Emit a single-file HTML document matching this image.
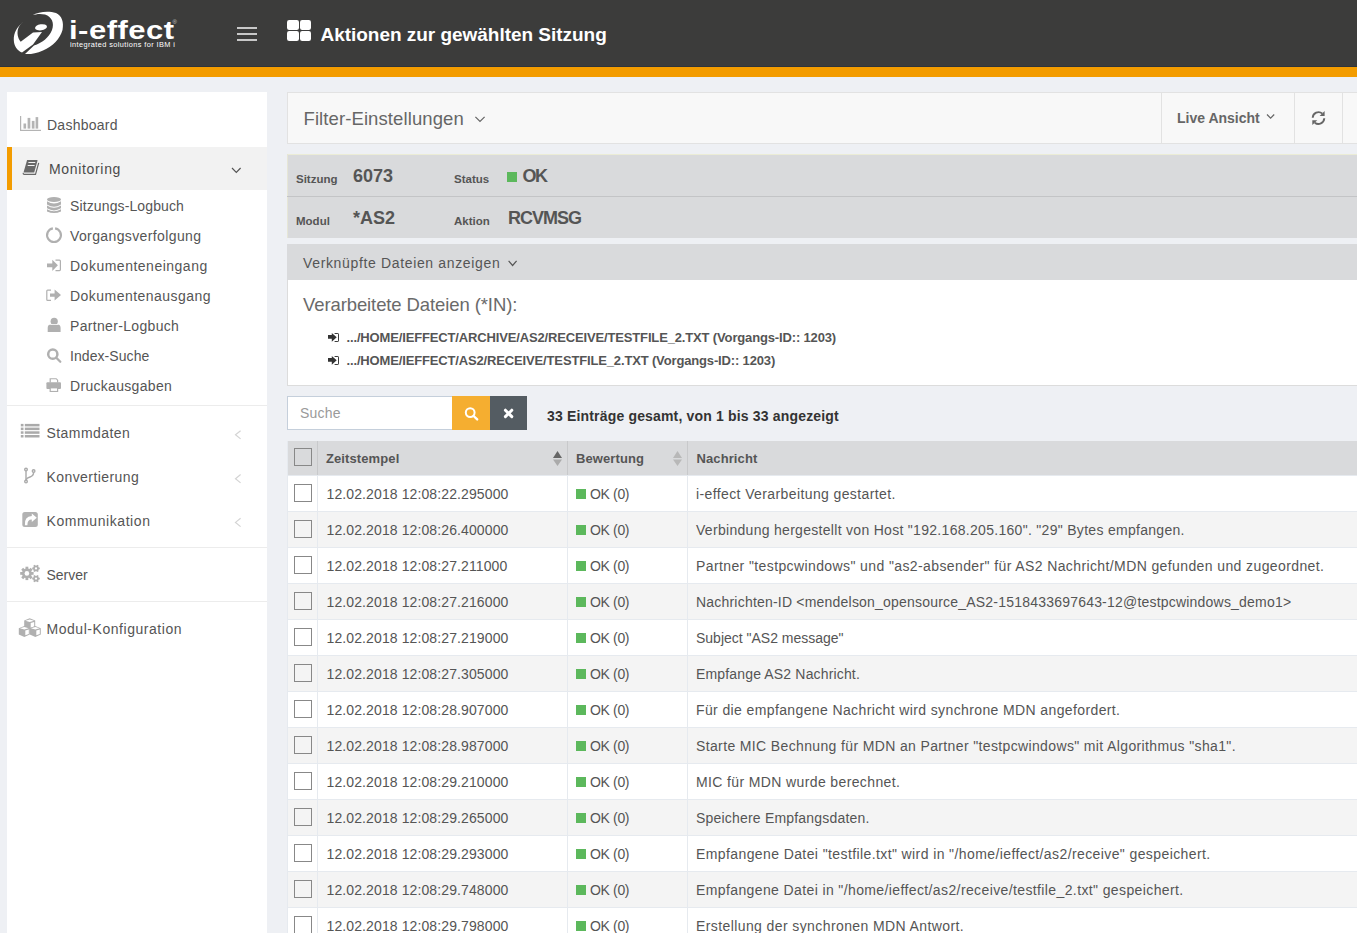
<!DOCTYPE html><html><head><meta charset="utf-8"><style>
*{box-sizing:border-box;margin:0;padding:0}
html,body{width:1357px;height:933px;overflow:hidden}
body{background:#eef0f4;font-family:"Liberation Sans",sans-serif;color:#555;position:relative}
div{position:absolute;white-space:nowrap;line-height:normal}
.t14{font-size:14px}
.b{font-weight:bold}
.side{color:#555;font-size:14px;letter-spacing:0.25px}
.row{left:288px;width:1069px;height:35px}
.rb{left:287px;width:1070px;height:1px;background:#e6eaef}
.cb{left:294px;width:18px;height:18px;border:1px solid #888}
.vl{width:1px;height:36px;background:#e6eaef}
</style></head><body>
<div style="left:0;top:0;width:1357px;height:66px;background:#3c3c3b"></div>
<div style="left:0;top:66px;width:1357px;height:1px;background:#2f343a"></div>
<div style="left:0;top:67px;width:1357px;height:10px;background:#f39c00"></div>
<div class="b" style="left:68.5px;top:16.3px;font-size:25px;color:#fff;letter-spacing:0.4px;transform-origin:0 0;transform:scaleX(1.24)">i-effect</div>
<div style="left:172.5px;top:19px;font-size:6px;color:#ccc">&#174;</div>
<div style="left:69.5px;top:41px;font-size:6.4px;color:#fff;letter-spacing:0.35px;transform-origin:0 0;transform:scaleX(1.15)">integrated solutions for IBM i</div>
<div style="left:237px;top:27px;width:20px;height:2px;background:#c8c8c8"></div>
<div style="left:237px;top:33px;width:20px;height:2px;background:#c8c8c8"></div>
<div style="left:237px;top:39px;width:20px;height:2px;background:#c8c8c8"></div>
<div style="left:287px;top:20px;width:11.8px;height:10px;background:#fff;border-radius:2.2px"></div>
<div style="left:299.5px;top:20px;width:11.8px;height:10px;background:#fff;border-radius:2.2px"></div>
<div style="left:287px;top:31.2px;width:11.8px;height:10px;background:#fff;border-radius:2.2px"></div>
<div style="left:299.5px;top:31.2px;width:11.8px;height:10px;background:#fff;border-radius:2.2px"></div>
<div class="b" style="left:320.5px;top:23.5px;font-size:19px;color:#fff;letter-spacing:-0.03px">Aktionen zur gewählten Sitzung</div>
<div style="left:7px;top:92px;width:260px;height:841px;background:#fff"></div>
<div style="left:7px;top:147px;width:260px;height:43px;background:#f2f2f2"></div>
<div style="left:7px;top:147px;width:5px;height:43px;background:#f39c00"></div>
<div class="side" style="left:47px;top:117px">Dashboard</div>
<div class="side" style="left:49px;top:161px;letter-spacing:0.67px;color:#4a4a4a">Monitoring</div>
<div class="side" style="left:70px;top:198px;letter-spacing:0.12px">Sitzungs-Logbuch</div>
<div class="side" style="left:70px;top:228px;letter-spacing:0.38px">Vorgangsverfolgung</div>
<div class="side" style="left:70px;top:258px;letter-spacing:0.5px">Dokumenteneingang</div>
<div class="side" style="left:70px;top:288px;letter-spacing:0.46px">Dokumentenausgang</div>
<div class="side" style="left:70px;top:318px;letter-spacing:0.33px">Partner-Logbuch</div>
<div class="side" style="left:70px;top:348px;letter-spacing:0.07px">Index-Suche</div>
<div class="side" style="left:70px;top:378px;letter-spacing:0.31px">Druckausgaben</div>
<div style="left:7px;top:405px;width:260px;height:1px;background:#ececec"></div>
<div style="left:7px;top:547px;width:260px;height:1px;background:#ececec"></div>
<div style="left:7px;top:601px;width:260px;height:1px;background:#ececec"></div>
<div class="side" style="left:46.5px;top:424.7px;letter-spacing:0.43px">Stammdaten</div>
<div class="side" style="left:46.5px;top:468.7px;letter-spacing:0.42px">Konvertierung</div>
<div class="side" style="left:46.5px;top:512.7px;letter-spacing:0.58px">Kommunikation</div>
<div class="side" style="left:46.5px;top:566.7px;letter-spacing:-0.03px">Server</div>
<div class="side" style="left:46.5px;top:620.7px;letter-spacing:0.54px">Modul-Konfiguration</div>
<div style="left:287px;top:92px;width:1070px;height:52px;background:#f8f8f8;border:1px solid #e2e2e2;border-right:none"></div>
<div style="left:303.5px;top:108px;font-size:18.5px;color:#666;letter-spacing:0.1px">Filter-Einstellungen</div>
<div style="left:1161px;top:92px;width:1px;height:52px;background:#e2e2e2"></div>
<div style="left:1294px;top:92px;width:1px;height:52px;background:#e2e2e2"></div>
<div style="left:1342px;top:92px;width:1px;height:52px;background:#e2e2e2"></div>
<div class="b" style="left:1177px;top:110px;font-size:14px;color:#666;letter-spacing:0px">Live Ansicht</div>
<div style="left:287px;top:154px;width:1070px;height:84px;background:#d9dadc"></div>
<div style="left:287px;top:154px;width:1070px;height:1px;background:#ebecd6"></div>
<div style="left:287px;top:154px;width:1px;height:84px;background:#e6e6d6"></div>
<div style="left:287px;top:196px;width:1070px;height:1px;background:#c3c4c6"></div>
<div class="b" style="left:296px;top:173px;font-size:11.5px;color:#555">Sitzung</div>
<div class="b" style="left:353px;top:166px;font-size:18px;color:#555">6073</div>
<div class="b" style="left:454px;top:173px;font-size:11.5px;color:#555">Status</div>
<div style="left:507px;top:172px;width:10px;height:10px;background:#5cb85c"></div>
<div class="b" style="left:522.5px;top:166px;font-size:18px;color:#555;letter-spacing:-1.5px">OK</div>
<div class="b" style="left:296px;top:214.5px;font-size:11.5px;color:#555">Modul</div>
<div class="b" style="left:353px;top:208px;font-size:18px;color:#555">*AS2</div>
<div class="b" style="left:454px;top:214.5px;font-size:11.5px;color:#555">Aktion</div>
<div class="b" style="left:508px;top:207.5px;font-size:18px;color:#555;letter-spacing:-1px">RCVMSG</div>
<div style="left:287px;top:244px;width:1070px;height:36px;background:#d9dadc"></div>
<div style="left:303px;top:255px;font-size:14px;color:#555;letter-spacing:0.65px">Verknüpfte Dateien anzeigen</div>
<div style="left:287px;top:280px;width:1070px;height:106px;background:#fff;border-left:1px solid #dcdcdc;border-bottom:1px solid #dcdcdc"></div>
<div style="left:303px;top:294px;font-size:18.5px;color:#6a6a6a;letter-spacing:-0.1px">Verarbeitete Dateien (*IN):</div>
<div class="b" style="left:346.5px;top:330px;font-size:13px;color:#555;letter-spacing:-0.15px">.../HOME/IEFFECT/ARCHIVE/AS2/RECEIVE/TESTFILE_2.TXT (Vorgangs-ID:: 1203)</div>
<div class="b" style="left:346.5px;top:352.5px;font-size:13px;color:#555;letter-spacing:-0.15px">.../HOME/IEFFECT/AS2/RECEIVE/TESTFILE_2.TXT (Vorgangs-ID:: 1203)</div>
<div style="left:287px;top:396px;width:166px;height:34px;background:#fff;border:1px solid #c5cfdb"></div>
<div style="left:300px;top:405px;font-size:14px;color:#9a9a9a;letter-spacing:0.2px">Suche</div>
<div style="left:452px;top:396px;width:38px;height:34px;background:#f5ae30"></div>
<div style="left:490px;top:396px;width:37px;height:34px;background:#545c62"></div>
<div class="b" style="left:547px;top:408px;font-size:14px;color:#333;letter-spacing:0.17px">33 Einträge gesamt, von 1 bis 33 angezeigt</div>
<div style="left:288px;top:441px;width:1069px;height:34px;background:#d9dadc"></div>
<div style="left:287px;top:441px;width:1px;height:492px;background:#e6eaef"></div>
<div style="left:317px;top:441px;width:1px;height:34px;background:#c8c9cb"></div>
<div style="left:567px;top:441px;width:1px;height:34px;background:#c8c9cb"></div>
<div style="left:687px;top:441px;width:1px;height:34px;background:#c8c9cb"></div>
<div class="cb" style="top:448px"></div>
<div class="b" style="left:326px;top:451px;font-size:13px;color:#555;letter-spacing:0.1px">Zeitstempel</div>
<div class="b" style="left:576px;top:451px;font-size:13px;color:#555;letter-spacing:0.1px">Bewertung</div>
<div class="b" style="left:696.5px;top:451px;font-size:13px;color:#555;letter-spacing:0.1px">Nachricht</div>
<div class="rb" style="top:475px"></div>
<div class="row" style="top:476px;background:#fff"></div>
<div class="cb" style="top:484px"></div>
<div class="vl" style="left:317px;top:475px"></div>
<div class="vl" style="left:567px;top:475px"></div>
<div class="vl" style="left:687px;top:475px"></div>
<div class="t14" style="left:326.5px;top:485.5px;letter-spacing:0.11px">12.02.2018 12:08:22.295000</div>
<div style="left:575.8px;top:489.2px;width:10px;height:10px;background:#5cb85c"></div>
<div class="t14" style="left:590px;top:485.5px;letter-spacing:-0.35px">OK (0)</div>
<div class="t14" style="left:696px;top:485.5px;letter-spacing:0.39px">i-effect Verarbeitung gestartet.</div>
<div class="rb" style="top:511px"></div>
<div class="row" style="top:512px;background:#f4f4f4"></div>
<div class="cb" style="top:520px"></div>
<div class="vl" style="left:317px;top:511px"></div>
<div class="vl" style="left:567px;top:511px"></div>
<div class="vl" style="left:687px;top:511px"></div>
<div class="t14" style="left:326.5px;top:521.5px;letter-spacing:0.11px">12.02.2018 12:08:26.400000</div>
<div style="left:575.8px;top:525.2px;width:10px;height:10px;background:#5cb85c"></div>
<div class="t14" style="left:590px;top:521.5px;letter-spacing:-0.35px">OK (0)</div>
<div class="t14" style="left:696px;top:521.5px;letter-spacing:0.297px">Verbindung hergestellt von Host &quot;192.168.205.160&quot;. &quot;29&quot; Bytes empfangen.</div>
<div class="rb" style="top:547px"></div>
<div class="row" style="top:548px;background:#fff"></div>
<div class="cb" style="top:556px"></div>
<div class="vl" style="left:317px;top:547px"></div>
<div class="vl" style="left:567px;top:547px"></div>
<div class="vl" style="left:687px;top:547px"></div>
<div class="t14" style="left:326.5px;top:557.5px;letter-spacing:0.11px">12.02.2018 12:08:27.211000</div>
<div style="left:575.8px;top:561.2px;width:10px;height:10px;background:#5cb85c"></div>
<div class="t14" style="left:590px;top:557.5px;letter-spacing:-0.35px">OK (0)</div>
<div class="t14" style="left:696px;top:557.5px;letter-spacing:0.392px">Partner &quot;testpcwindows&quot; und &quot;as2-absender&quot; für AS2 Nachricht/MDN gefunden und zugeordnet.</div>
<div class="rb" style="top:583px"></div>
<div class="row" style="top:584px;background:#f4f4f4"></div>
<div class="cb" style="top:592px"></div>
<div class="vl" style="left:317px;top:583px"></div>
<div class="vl" style="left:567px;top:583px"></div>
<div class="vl" style="left:687px;top:583px"></div>
<div class="t14" style="left:326.5px;top:593.5px;letter-spacing:0.11px">12.02.2018 12:08:27.216000</div>
<div style="left:575.8px;top:597.2px;width:10px;height:10px;background:#5cb85c"></div>
<div class="t14" style="left:590px;top:593.5px;letter-spacing:-0.35px">OK (0)</div>
<div class="t14" style="left:696px;top:593.5px;letter-spacing:0.206px">Nachrichten-ID &lt;mendelson_opensource_AS2-1518433697643-12@testpcwindows_demo1&gt;</div>
<div class="rb" style="top:619px"></div>
<div class="row" style="top:620px;background:#fff"></div>
<div class="cb" style="top:628px"></div>
<div class="vl" style="left:317px;top:619px"></div>
<div class="vl" style="left:567px;top:619px"></div>
<div class="vl" style="left:687px;top:619px"></div>
<div class="t14" style="left:326.5px;top:629.5px;letter-spacing:0.11px">12.02.2018 12:08:27.219000</div>
<div style="left:575.8px;top:633.2px;width:10px;height:10px;background:#5cb85c"></div>
<div class="t14" style="left:590px;top:629.5px;letter-spacing:-0.35px">OK (0)</div>
<div class="t14" style="left:696px;top:629.5px;letter-spacing:-0.005px">Subject &quot;AS2 message&quot;</div>
<div class="rb" style="top:655px"></div>
<div class="row" style="top:656px;background:#f4f4f4"></div>
<div class="cb" style="top:664px"></div>
<div class="vl" style="left:317px;top:655px"></div>
<div class="vl" style="left:567px;top:655px"></div>
<div class="vl" style="left:687px;top:655px"></div>
<div class="t14" style="left:326.5px;top:665.5px;letter-spacing:0.11px">12.02.2018 12:08:27.305000</div>
<div style="left:575.8px;top:669.2px;width:10px;height:10px;background:#5cb85c"></div>
<div class="t14" style="left:590px;top:665.5px;letter-spacing:-0.35px">OK (0)</div>
<div class="t14" style="left:696px;top:665.5px;letter-spacing:0.159px">Empfange AS2 Nachricht.</div>
<div class="rb" style="top:691px"></div>
<div class="row" style="top:692px;background:#fff"></div>
<div class="cb" style="top:700px"></div>
<div class="vl" style="left:317px;top:691px"></div>
<div class="vl" style="left:567px;top:691px"></div>
<div class="vl" style="left:687px;top:691px"></div>
<div class="t14" style="left:326.5px;top:701.5px;letter-spacing:0.11px">12.02.2018 12:08:28.907000</div>
<div style="left:575.8px;top:705.2px;width:10px;height:10px;background:#5cb85c"></div>
<div class="t14" style="left:590px;top:701.5px;letter-spacing:-0.35px">OK (0)</div>
<div class="t14" style="left:696px;top:701.5px;letter-spacing:0.381px">Für die empfangene Nachricht wird synchrone MDN angefordert.</div>
<div class="rb" style="top:727px"></div>
<div class="row" style="top:728px;background:#f4f4f4"></div>
<div class="cb" style="top:736px"></div>
<div class="vl" style="left:317px;top:727px"></div>
<div class="vl" style="left:567px;top:727px"></div>
<div class="vl" style="left:687px;top:727px"></div>
<div class="t14" style="left:326.5px;top:737.5px;letter-spacing:0.11px">12.02.2018 12:08:28.987000</div>
<div style="left:575.8px;top:741.2px;width:10px;height:10px;background:#5cb85c"></div>
<div class="t14" style="left:590px;top:737.5px;letter-spacing:-0.35px">OK (0)</div>
<div class="t14" style="left:696px;top:737.5px;letter-spacing:0.363px">Starte MIC Bechnung für MDN an Partner &quot;testpcwindows&quot; mit Algorithmus &quot;sha1&quot;.</div>
<div class="rb" style="top:763px"></div>
<div class="row" style="top:764px;background:#fff"></div>
<div class="cb" style="top:772px"></div>
<div class="vl" style="left:317px;top:763px"></div>
<div class="vl" style="left:567px;top:763px"></div>
<div class="vl" style="left:687px;top:763px"></div>
<div class="t14" style="left:326.5px;top:773.5px;letter-spacing:0.11px">12.02.2018 12:08:29.210000</div>
<div style="left:575.8px;top:777.2px;width:10px;height:10px;background:#5cb85c"></div>
<div class="t14" style="left:590px;top:773.5px;letter-spacing:-0.35px">OK (0)</div>
<div class="t14" style="left:696px;top:773.5px;letter-spacing:0.375px">MIC für MDN wurde berechnet.</div>
<div class="rb" style="top:799px"></div>
<div class="row" style="top:800px;background:#f4f4f4"></div>
<div class="cb" style="top:808px"></div>
<div class="vl" style="left:317px;top:799px"></div>
<div class="vl" style="left:567px;top:799px"></div>
<div class="vl" style="left:687px;top:799px"></div>
<div class="t14" style="left:326.5px;top:809.5px;letter-spacing:0.11px">12.02.2018 12:08:29.265000</div>
<div style="left:575.8px;top:813.2px;width:10px;height:10px;background:#5cb85c"></div>
<div class="t14" style="left:590px;top:809.5px;letter-spacing:-0.35px">OK (0)</div>
<div class="t14" style="left:696px;top:809.5px;letter-spacing:0.196px">Speichere Empfangsdaten.</div>
<div class="rb" style="top:835px"></div>
<div class="row" style="top:836px;background:#fff"></div>
<div class="cb" style="top:844px"></div>
<div class="vl" style="left:317px;top:835px"></div>
<div class="vl" style="left:567px;top:835px"></div>
<div class="vl" style="left:687px;top:835px"></div>
<div class="t14" style="left:326.5px;top:845.5px;letter-spacing:0.11px">12.02.2018 12:08:29.293000</div>
<div style="left:575.8px;top:849.2px;width:10px;height:10px;background:#5cb85c"></div>
<div class="t14" style="left:590px;top:845.5px;letter-spacing:-0.35px">OK (0)</div>
<div class="t14" style="left:696px;top:845.5px;letter-spacing:0.399px">Empfangene Datei &quot;testfile.txt&quot; wird in &quot;/home/ieffect/as2/receive&quot; gespeichert.</div>
<div class="rb" style="top:871px"></div>
<div class="row" style="top:872px;background:#f4f4f4"></div>
<div class="cb" style="top:880px"></div>
<div class="vl" style="left:317px;top:871px"></div>
<div class="vl" style="left:567px;top:871px"></div>
<div class="vl" style="left:687px;top:871px"></div>
<div class="t14" style="left:326.5px;top:881.5px;letter-spacing:0.11px">12.02.2018 12:08:29.748000</div>
<div style="left:575.8px;top:885.2px;width:10px;height:10px;background:#5cb85c"></div>
<div class="t14" style="left:590px;top:881.5px;letter-spacing:-0.35px">OK (0)</div>
<div class="t14" style="left:696px;top:881.5px;letter-spacing:0.385px">Empfangene Datei in &quot;/home/ieffect/as2/receive/testfile_2.txt&quot; gespeichert.</div>
<div class="rb" style="top:907px"></div>
<div class="row" style="top:908px;background:#fff"></div>
<div class="cb" style="top:916px"></div>
<div class="vl" style="left:317px;top:907px"></div>
<div class="vl" style="left:567px;top:907px"></div>
<div class="vl" style="left:687px;top:907px"></div>
<div class="t14" style="left:326.5px;top:917.5px;letter-spacing:0.11px">12.02.2018 12:08:29.798000</div>
<div style="left:575.8px;top:921.2px;width:10px;height:10px;background:#5cb85c"></div>
<div class="t14" style="left:590px;top:917.5px;letter-spacing:-0.35px">OK (0)</div>
<div class="t14" style="left:696px;top:917.5px;letter-spacing:0.402px">Erstellung der synchronen MDN Antwort.</div>
<svg style="position:absolute;left:0;top:0" width="1357" height="933" viewBox="0 0 1357 933">
<!-- logo -->
<g fill="#fff">
 <path d="M32.5,15.2 C38,12 48,10.5 56,13 C62,16 64,22 62.5,30 C60,39 53,46 43,50.5 C36,53.5 30,54.5 25,54 L34,45.5 C42,43 49,37.5 52,30 C54.5,23 52,17 45,14.5 C40,13.3 36,14 32.5,15.2 Z"/>
 <path d="M23,22 C17,27 13.5,33 13.8,40 C14,46 17,50.5 22,52.5 L33,44.5 L42,32 L33,32.5 L20.7,41.7 C17.5,38 17,33 18,29 C19,26 21,23.5 23,22 Z"/>
 <ellipse cx="41" cy="27.3" rx="6" ry="3" transform="rotate(-8 41 27.3)"/>
</g>
<!-- dashboard bar chart -->
<g fill="#b4b4b4">
 <rect x="20" y="116" width="1.2" height="15"/>
 <rect x="20" y="129.8" width="21" height="1.2"/>
 <rect x="23.5" y="123.5" width="2.6" height="5.1"/>
 <rect x="27.6" y="117.9" width="2.7" height="10.7"/>
 <rect x="31.8" y="120.9" width="2.7" height="7.7"/>
 <rect x="35.6" y="117.1" width="2.6" height="11.5"/>
</g>
<!-- book -->
<g>
 <path fill="#686868" d="M27.1,160 L37,160 Q37.7,160 37.5,160.8 L34.2,172.6 L23.5,172.6 Z"/>
 <path stroke="#f2f2f2" stroke-width="1" d="M28.4,162.5 L35.3,162.5 M27.7,165.5 L34.6,165.5"/>
 <path fill="none" stroke="#686868" stroke-width="1.2" d="M38.7,162.8 L35.5,174.4 L24.2,174.4 Q23,174.4 23.3,172.8"/>
</g>
<!-- monitoring chevron -->
<path fill="none" stroke="#555" stroke-width="1.2" d="M232,168 L236.3,172.3 L240.6,168"/>
<!-- database -->
<g fill="#b0b0b0">
 <ellipse cx="54" cy="199.6" rx="7" ry="2.5"/>
 <path d="M47,201.2 Q54,205.8 61,201.2 L61,204.6 Q54,209 47,204.6 Z"/>
 <path d="M47,205.6 Q54,210 61,205.6 L61,208.3 Q54,212.6 47,208.3 Z"/>
 <path d="M47,209.2 Q54,213.2 61,209.2 L61,211.4 Q54,214.6 47,211.4 Z"/>
</g>
<!-- circle notch -->
<path fill="none" stroke="#b0b0b0" stroke-width="2.2" d="M52.9,228.3 A6.9,6.9 0 1 0 55.1,228.3"/>
<!-- sign in -->
<g fill="#b0b0b0">
 <path d="M47,263.4 L52.3,263.4 L52.3,259.8 L57.9,265.3 L52.3,270.9 L52.3,267.2 L47,267.2 Z"/>
</g>
<path fill="none" stroke="#b0b0b0" stroke-width="1.2" d="M55.5,260.1 L59.5,260.1 Q60.4,260.1 60.4,261.1 L60.4,269.6 Q60.4,270.6 59.5,270.6 L55.5,270.6"/>
<!-- sign out -->
<path fill="none" stroke="#b0b0b0" stroke-width="1.2" d="M51,290.1 L47.6,290.1 Q46.8,290.1 46.8,291.1 L46.8,299.4 Q46.8,300.3 47.6,300.3 L51,300.3"/>
<path fill="#b0b0b0" d="M50,293.4 L54.6,293.4 L54.6,289.6 L61,295.1 L54.6,300.6 L54.6,296.8 L50,296.8 Z"/>
<!-- user -->
<g fill="#b0b0b0">
 <circle cx="54.2" cy="321.4" r="3.6"/>
 <path d="M47.7,332 L47.7,328 Q47.7,324.6 51,324.6 L57.3,324.6 Q60.6,324.6 60.6,328 L60.6,332 Z"/>
</g>
<rect x="50.5" y="324" width="7.4" height="0.8" fill="#fff"/>
<!-- search -->
<circle cx="52.8" cy="354.2" r="4.6" fill="none" stroke="#b0b0b0" stroke-width="2.5"/>
<path d="M56.3,357.7 L60.3,361.8" stroke="#b0b0b0" stroke-width="2.3" stroke-linecap="round"/>
<!-- print -->
<g fill="#b0b0b0">
 <path d="M49.6,382.5 L49.6,378.2 L56.5,378.2 L58.2,379.9 L58.2,382.5 L57,382.5 L57,380.3 L56,379.3 L50.8,379.3 L50.8,382.5 Z"/>
 <rect x="46.4" y="382.3" width="14.6" height="6.8" rx="1"/>
 <path d="M49.6,387.5 L58.2,387.5 L58.2,392 L49.6,392 Z"/>
</g>
<rect x="50.8" y="388.4" width="6.2" height="2.5" fill="#fff"/>
<!-- list -->
<g fill="#aaa">
 <rect x="20.8" y="423.9" width="2.7" height="2.5"/><rect x="24.8" y="423.9" width="14.7" height="2.5"/>
 <rect x="20.8" y="427.6" width="2.7" height="2.5"/><rect x="24.8" y="427.6" width="14.7" height="2.5"/>
 <rect x="20.8" y="431.3" width="2.7" height="2.5"/><rect x="24.8" y="431.3" width="14.7" height="2.5"/>
 <rect x="20.8" y="435.0" width="2.7" height="2.5"/><rect x="24.8" y="435.0" width="14.7" height="2.5"/>
</g>
<!-- branch -->
<g fill="none" stroke="#aaa" stroke-width="1.4">
 <circle cx="26" cy="469.6" r="1.3"/>
 <circle cx="26" cy="481.6" r="1.3"/>
 <circle cx="33.6" cy="471" r="1.3"/>
 <path d="M26,470.9 L26,480.3"/>
 <path d="M33.6,472.3 Q33.6,476 30,477 Q26.5,478 26,480"/>
</g>
<!-- share square -->
<rect x="22.3" y="511.9" width="15.5" height="15.1" rx="2.5" fill="#b2b2b2"/>
<path fill="#fff" d="M24.9,525.3 Q24.2,516.3 31.8,516.1 L31.8,513.5 L36.8,517.7 L31.8,521.9 L31.8,519.5 Q27.3,519.4 27.4,525.3 Z"/>
<!-- gears -->
<circle cx="26.9" cy="573.4" r="4.9" fill="#b0b0b0"/><rect x="25.5" y="566.6999999999999" width="2.8" height="6.7" fill="#b0b0b0" transform="rotate(0.0 26.9 573.4)"/><rect x="25.5" y="566.6999999999999" width="2.8" height="6.7" fill="#b0b0b0" transform="rotate(45.0 26.9 573.4)"/><rect x="25.5" y="566.6999999999999" width="2.8" height="6.7" fill="#b0b0b0" transform="rotate(90.0 26.9 573.4)"/><rect x="25.5" y="566.6999999999999" width="2.8" height="6.7" fill="#b0b0b0" transform="rotate(135.0 26.9 573.4)"/><rect x="25.5" y="566.6999999999999" width="2.8" height="6.7" fill="#b0b0b0" transform="rotate(180.0 26.9 573.4)"/><rect x="25.5" y="566.6999999999999" width="2.8" height="6.7" fill="#b0b0b0" transform="rotate(225.0 26.9 573.4)"/><rect x="25.5" y="566.6999999999999" width="2.8" height="6.7" fill="#b0b0b0" transform="rotate(270.0 26.9 573.4)"/><rect x="25.5" y="566.6999999999999" width="2.8" height="6.7" fill="#b0b0b0" transform="rotate(315.0 26.9 573.4)"/><circle cx="26.9" cy="573.4" r="2.3" fill="#fff"/>
<circle cx="36" cy="568.4" r="2.9" fill="#b0b0b0"/><rect x="35.15" y="564.6" width="1.7" height="3.8" fill="#b0b0b0" transform="rotate(30.0 36 568.4)"/><rect x="35.15" y="564.6" width="1.7" height="3.8" fill="#b0b0b0" transform="rotate(90.0 36 568.4)"/><rect x="35.15" y="564.6" width="1.7" height="3.8" fill="#b0b0b0" transform="rotate(150.0 36 568.4)"/><rect x="35.15" y="564.6" width="1.7" height="3.8" fill="#b0b0b0" transform="rotate(210.0 36 568.4)"/><rect x="35.15" y="564.6" width="1.7" height="3.8" fill="#b0b0b0" transform="rotate(270.0 36 568.4)"/><rect x="35.15" y="564.6" width="1.7" height="3.8" fill="#b0b0b0" transform="rotate(330.0 36 568.4)"/><circle cx="36" cy="568.4" r="1.15" fill="#fff"/>
<circle cx="36" cy="578.6" r="2.9" fill="#b0b0b0"/><rect x="35.15" y="574.8000000000001" width="1.7" height="3.8" fill="#b0b0b0" transform="rotate(30.0 36 578.6)"/><rect x="35.15" y="574.8000000000001" width="1.7" height="3.8" fill="#b0b0b0" transform="rotate(90.0 36 578.6)"/><rect x="35.15" y="574.8000000000001" width="1.7" height="3.8" fill="#b0b0b0" transform="rotate(150.0 36 578.6)"/><rect x="35.15" y="574.8000000000001" width="1.7" height="3.8" fill="#b0b0b0" transform="rotate(210.0 36 578.6)"/><rect x="35.15" y="574.8000000000001" width="1.7" height="3.8" fill="#b0b0b0" transform="rotate(270.0 36 578.6)"/><rect x="35.15" y="574.8000000000001" width="1.7" height="3.8" fill="#b0b0b0" transform="rotate(330.0 36 578.6)"/><circle cx="36" cy="578.6" r="1.15" fill="#fff"/>
<!-- cubes -->
<path fill="#b0b0b0" d="M29.7,618.3 L35.2,620.5999999999999 L35.2,627.0 L29.7,629.3 L24.2,627.0 L24.2,620.5999999999999 Z"/><path fill="#fff" d="M29.7,619.4 L34.0,620.6999999999999 L29.7,622.0 L25.4,620.6999999999999 Z"/><path fill="#fff" d="M30.7,623.0 L34.2,621.9 L34.2,626.5 L30.7,627.6999999999999 Z"/>
<path fill="#b0b0b0" d="M24.3,625.9 L29.8,628.1999999999999 L29.8,634.6 L24.3,636.9 L18.8,634.6 L18.8,628.1999999999999 Z"/><path fill="#fff" d="M24.3,627.0 L28.6,628.3 L24.3,629.6 L20.0,628.3 Z"/><path fill="#fff" d="M25.3,630.6 L28.8,629.5 L28.8,634.1 L25.3,635.3 Z"/>
<path fill="#b0b0b0" d="M35.3,625.9 L40.8,628.1999999999999 L40.8,634.6 L35.3,636.9 L29.799999999999997,634.6 L29.799999999999997,628.1999999999999 Z"/><path fill="#fff" d="M35.3,627.0 L39.599999999999994,628.3 L35.3,629.6 L30.999999999999996,628.3 Z"/><path fill="#fff" d="M36.3,630.6 L39.8,629.5 L39.8,634.1 L36.3,635.3 Z"/>
<!-- left chevrons -->
<g fill="none" stroke="#d4d4d4" stroke-width="1.2">
 <path d="M240.6,430.7 L235.5,434.8 L240.6,438.9"/>
 <path d="M240.6,474.5 L235.5,478.7 L240.6,482.9"/>
 <path d="M240.6,518.2 L235.5,522.4 L240.6,526.6"/>
</g>
<!-- filter chevrons -->
<g fill="none" stroke-width="1.2">
 <path stroke="#666" d="M475.4,116.8 L480,121.5 L484.6,116.8"/>
 <path stroke="#555" d="M508.6,260.8 L512.6,265.5 L516.6,260.8"/>
 <path stroke="#666" d="M1267,114.5 L1270.6,118.2 L1274.2,114.5"/>
</g>
<!-- refresh -->
<g fill="none" stroke="#666" stroke-width="1.9">
 <path d="M1312.7,117.8 A5.9,5.9 0 0 1 1322.2,113.4"/>
 <path d="M1324.3,118.3 A5.9,5.9 0 0 1 1314.8,122.7"/>
</g>
<g fill="#666">
 <path d="M1324.6,110.9 L1324.6,115.9 L1319.6,115.9 Z"/>
 <path d="M1312.3,125 L1312.3,120.2 L1317.3,120.2 Z"/>
</g>
<!-- file icons -->
<g fill="#333">
 <path d="M328,334.9 L331.8,334.9 L331.8,332.9 L336.7,337.3 L331.8,341.7 L331.8,338.8 L328,338.8 Z"/>
 <path d="M328,357.9 L331.8,357.9 L331.8,355.9 L336.7,360.3 L331.8,364.7 L331.8,361.8 L328,361.8 Z"/>
</g>
<g fill="none" stroke="#333" stroke-width="0.95">
 <path d="M334.6,333.5 L337.9,333.5 Q338.5,333.5 338.5,334.1 L338.5,340.9 Q338.5,341.5 337.9,341.5 L334.6,341.5"/>
 <path d="M334.6,356.5 L337.9,356.5 Q338.5,356.5 338.5,357.1 L338.5,363.9 Q338.5,364.5 337.9,364.5 L334.6,364.5"/>
</g>
<!-- search button icons -->
<circle cx="470.2" cy="412.6" r="4.4" fill="none" stroke="#fff" stroke-width="2"/>
<path d="M473.6,416 L477.2,419.4" stroke="#fff" stroke-width="2.4" stroke-linecap="round"/>
<path d="M505.4,410.2 L511.8,416.6 M511.8,410.2 L505.4,416.6" stroke="#fff" stroke-width="3" stroke-linecap="round"/>
<!-- sort arrows -->
<path fill="#666" d="M553,458 L557.5,451 L562,458 Z"/>
<path fill="#aaa" d="M553,459.5 L562,459.5 L557.5,466 Z"/>
<path fill="#b8b8b8" d="M673,458 L677.5,451 L682,458 Z"/>
<path fill="#b8b8b8" d="M673,459.5 L682,459.5 L677.5,466 Z"/>
</svg>

</body></html>
